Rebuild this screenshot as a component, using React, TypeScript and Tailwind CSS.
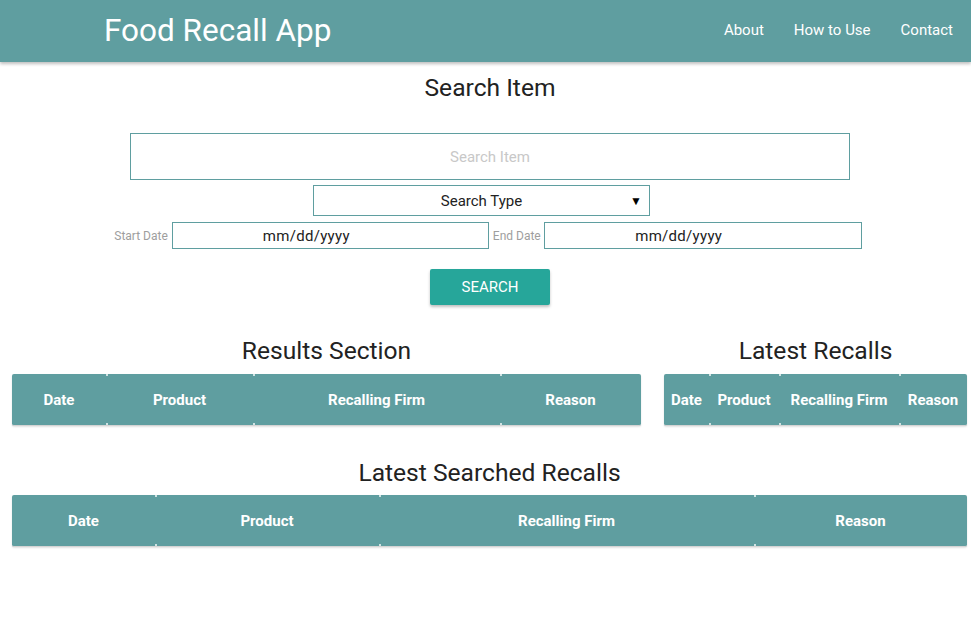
import React from 'react';

const font = { fontFamily: 'Roboto, "Liberation Sans", sans-serif' };

type Col = { label: string; width: string };

function HeaderTable({ cols }: { cols: Col[] }) {
  return (
    <div className="w-full rounded-[2px] bg-[#5f9ea0] border-b border-[#d4d4d4] shadow-[0_1px_2px_rgba(0,0,0,0.12)]">
      <div className="flex h-[51px] items-center">
        {cols.map((c, i) => (
          <div
            key={c.label}
            className={`${c.width} relative flex h-full items-center justify-center pt-[2px] text-[15px] font-bold text-white ${
              i > 0
                ? 'before:absolute before:left-0 before:top-0 before:h-[2px] before:w-[2px] before:bg-[#cfe3e3] after:absolute after:left-0 after:bottom-0 after:h-[2px] after:w-[2px] after:bg-[#cfe3e3]'
                : ''
            }`}
          >
            {c.label}
          </div>
        ))}
      </div>
    </div>
  );
}

export default function App() {
  return (
    <div className="min-h-screen bg-white text-[#222]" style={font}>
      {/* top bar */}
      <nav className="flex h-[62px] items-center justify-between bg-[#5f9ea0] pl-[104px] pr-[18px] shadow-[0_2px_3px_rgba(0,0,0,0.25)]">
        <span className="text-[31.5px] leading-none text-white">Food Recall App</span>
        <div className="mb-[2px] flex gap-[30px] text-[15px] text-white">
          <a>About</a>
          <a>How to Use</a>
          <a>Contact</a>
        </div>
      </nav>

      {/* search form */}
      <div className="flex flex-col items-center pl-[9px]">
        <h5 className="mt-[10px] text-[24.6px] leading-[32px] text-[#222]">Search Item</h5>
        <div className="mt-[29px] flex h-[47px] w-[720px] items-center justify-center border border-[#5f9ea0] pt-[2px] text-[15px] text-[#c8c8c8]">
          Search Item
        </div>
        <div className="relative mr-[17px] mt-[5px] flex h-[31px] w-[337px] items-center justify-center border border-[#5f9ea0] pt-[2px] text-[15px] text-[#222]">
          Search Type
          <span className="absolute right-[7px] top-[6px] text-[12px] text-black">▼</span>
        </div>
        <div className="mr-[4px] mt-[6px] flex items-center">
          <span className="mr-[4px] text-[12px] text-[#9e9e9e]">Start Date</span>
          <div className="flex h-[27px] w-[317px] items-center justify-center border border-[#5f9ea0] pr-[48px] pt-[2px] text-[15px] tracking-[0.3px] text-[#222]">
            mm/dd/yyyy
          </div>
          <span className="ml-[4px] mr-[3px] text-[12px] text-[#9e9e9e]">End Date</span>
          <div className="flex h-[27px] w-[318px] items-center justify-center border border-[#5f9ea0] pr-[48px] pt-[2px] text-[15px] tracking-[0.3px] text-[#222]">
            mm/dd/yyyy
          </div>
        </div>
        <button className="mt-[20px] h-[36px] w-[120px] rounded-[2px] bg-[#26a69a] text-[15px] uppercase text-white shadow-[0_2px_3px_rgba(0,0,0,0.25)]">
          Search
        </button>
      </div>

      {/* results + latest */}
      <div className="mt-[30px] flex pl-[12px] pr-[4px]">
        <div className="w-[629px]">
          <h5 className="text-center text-[24.6px] leading-[32px]">Results Section</h5>
          <div className="mt-[7px]">
            <HeaderTable
              cols={[
                { label: 'Date', width: 'w-[94px]' },
                { label: 'Product', width: 'w-[147px]' },
                { label: 'Recalling Firm', width: 'w-[247px]' },
                { label: 'Reason', width: 'w-[141px]' },
              ]}
            />
          </div>
        </div>
        <div className="ml-[23px] w-[303px]">
          <h5 className="text-center text-[24.6px] leading-[32px]">Latest Recalls</h5>
          <div className="mt-[7px]">
            <HeaderTable
              cols={[
                { label: 'Date', width: 'w-[45px]' },
                { label: 'Product', width: 'w-[70px]' },
                { label: 'Recalling Firm', width: 'w-[120px]' },
                { label: 'Reason', width: 'w-[68px]' },
              ]}
            />
          </div>
        </div>
      </div>

      {/* latest searched */}
      <div className="mt-[31px] pl-[12px] pr-[4px]">
        <h5 className="text-center text-[24.6px] leading-[32px]">Latest Searched Recalls</h5>
        <div className="mt-[6px]">
          <HeaderTable
            cols={[
              { label: 'Date', width: 'w-[143px]' },
              { label: 'Product', width: 'w-[224px]' },
              { label: 'Recalling Firm', width: 'w-[375px]' },
              { label: 'Reason', width: 'w-[213px]' },
            ]}
          />
        </div>
      </div>
    </div>
  );
}
